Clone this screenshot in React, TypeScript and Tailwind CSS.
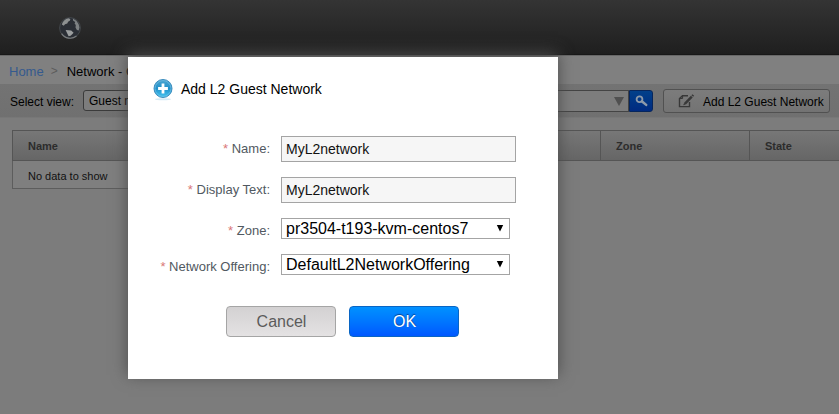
import type { ReactNode } from "react";

function Globe() {
  return (
    <svg width="24" height="24" viewBox="0 0 24 24">
      <circle cx="12" cy="12" r="10.4" fill="#2a2e35" stroke="#43474b" strokeWidth="1" />
      <path d="M3.8 8.6C4.8 5.3 7 3 10.4 2.2l2 .9-.6 1.7-1.7 1-.8 1.8-2.3.6-1.2 1.6z" fill="#8d9091" />
      <path d="M14.8 2.6l3.6 2.2 2.2 3.2.9 3.6-.8 2.9-1.8-.4-1.4-2.7.3-2.3-1.2-1.5.6-1.6-2-1.3z" fill="#7d8183" />
      <path d="M7.6 14l3.2.3 2.4.2 2.4 2.2-1.4 1.6-1.6 1.4-2 .6-1.2-2.6z" fill="#9b9e9f" />
      <path d="M3.6 17.6a10.2 10.2 0 0 0 14.9 2.4" fill="none" stroke="#777a7c" strokeWidth="1.1" />
    </svg>
  );
}

function PlusBadge() {
  return (
    <svg width="20" height="23" viewBox="0 0 20 23" className="shrink-0">
      <defs>
        <linearGradient id="badge" x1="0" y1="0" x2="0" y2="1">
          <stop offset="0" stopColor="#4fa5cf" />
          <stop offset=".5" stopColor="#2191cb" />
          <stop offset="1" stopColor="#43c6f2" />
        </linearGradient>
      </defs>
      <ellipse cx="10" cy="20.2" rx="8" ry="1" fill="#d5eaf5" />
      <circle cx="10" cy="9.5" r="9" fill="url(#badge)" stroke="#3b8cbd" strokeWidth="1" />
      <circle cx="10" cy="9.5" r="7.9" fill="none" stroke="#78c3e6" strokeWidth=".6" />
      <path d="M10 4.6v9.8M5.1 9.5h9.8" stroke="#fff" strokeWidth="2.8" />
    </svg>
  );
}

function EditIcon() {
  return (
    <svg width="17" height="16" viewBox="0 0 17 16" fill="none" stroke="#383838">
      <path d="M10 2.7H4.5L1.5 5.5v8.1h10V9" strokeWidth="1.4" />
      <path d="M4.6 2.7v2.8H1.5" strokeWidth="1" />
      <path d="M7 10.6l6.8-7" strokeWidth="2.5" />
      <path d="M14.3 3l1-1" strokeWidth="2.4" />
      <path d="M5.6 12l1-2 1 1z" fill="#383838" strokeWidth=".6" />
    </svg>
  );
}

function Field({ label, className, children }: { label: string; className: string; children: ReactNode }) {
  return (
    <div className={`flex ${className}`}>
      <div className="mr-[11px] w-[142px] shrink-0 whitespace-nowrap pt-[5px] text-right text-[13px] leading-[15px] text-[#515961]">
        <span className="text-[#d97878]">* </span>
        {label}:
      </div>
      {children}
    </div>
  );
}

function TextBox({ value }: { value: string }) {
  return (
    <div className="h-[26px] w-[235px] border border-[#a4a4a4] bg-[#f6f6f6] pl-1 text-[14px] leading-[25px] text-[#111]">
      {value}
    </div>
  );
}

function SelectBox({ value }: { value: string }) {
  return (
    <div className="flex h-[21px] w-[229px] items-center justify-between border border-[#a4a4a4] bg-white pl-1 pr-[5px] text-[16px] leading-[19px] text-black">
      <span>{value}</span>
      <svg width="8" height="9" viewBox="0 0 8 9">
        <path d="M.8 1h6.4L4 7.6z" fill="#000" />
      </svg>
    </div>
  );
}

function HeaderCell({ text, className }: { text: string; className: string }) {
  return (
    <div className={`border-l border-[#555] pl-[15px] text-[11px] font-bold leading-[30px] text-[#2c2c2c] ${className}`}>
      {text}
    </div>
  );
}

export default function App() {
  return (
    <div className="relative h-[414px] w-[839px] overflow-hidden bg-[#7c7c7c] font-['Liberation_Sans',Arial,sans-serif] text-black">
      <header className="h-[55px] border-b border-[#181818] bg-linear-to-b from-[#343434] to-[#1f1f1f] pl-[58px] pt-4">
        <Globe />
      </header>

      <nav className="flex h-[29px] items-center border-t border-[#686868] bg-[#808080] pl-[9px] pt-[3px] text-[13px] leading-[15px]">
        <span className="text-[#355a8e]">Home</span>
        <span className="ml-[7px] text-[12px] text-[#5c5c5c]">&gt;</span>
        <span className="ml-[9px] whitespace-nowrap">Network - Guest networks</span>
      </nav>

      <div className="flex h-[34px] items-center border-b border-[#777] bg-linear-to-b from-[#737373] to-[#707070] pl-[10px] text-[12px]">
        <span className="w-[73px] pt-[2px]">Select view:</span>
        <div className="h-[21px] w-[160px] rounded-[3px] border border-[#3b3b3b] bg-[#7d7d7d] pl-[5px] leading-[21px]">
          Guest networks
        </div>
        <div className="ml-[157px] flex h-[22px] w-[229px] items-center justify-end border border-[#444] bg-[#7d7d7d] pr-[4px] pt-px">
          <svg width="10" height="9" viewBox="0 0 10 9">
            <path d="M0 0h10L5 9z" fill="#505050" />
          </svg>
        </div>
        <div className="flex h-[22px] w-[24px] items-center justify-center rounded-r-[3px] border border-[#07265c] bg-linear-to-b from-[#02408a] to-[#002a80]">
          <svg width="13" height="12" viewBox="0 0 13 12" fill="none" stroke="#8d9aaa">
            <circle cx="4.5" cy="4.2" r="2.9" strokeWidth="1.8" />
            <path d="M6.8 6.2l4.4 3.7" strokeWidth="2.5" strokeLinecap="round" />
          </svg>
        </div>
        <div className="ml-[10px] flex h-[24px] w-[167px] items-center rounded-[3px] border border-[#515151] bg-linear-to-b from-[#7c7c7c] to-[#737373] pl-[14px]">
          <EditIcon />
          <span className="ml-[8px] whitespace-nowrap pt-[2px]">Add L2 Guest Network</span>
        </div>
      </div>

      <section className="pl-3 pt-3">
        <div className="flex h-[31px] border-y border-[#555] bg-linear-to-b from-[#777] to-[#666]">
          <HeaderCell text="Name" className="w-[588px]" />
          <HeaderCell text="Zone" className="w-[149px]" />
          <HeaderCell text="State" className="w-[90px]" />
        </div>
        <div className="h-[28px] w-[400px] border border-t-0 border-[#5d5d5d] bg-[#7f7f7f] pl-[15px] text-[11px] leading-[31px] text-[#111]">
          No data to show
        </div>
      </section>

      <div className="absolute left-[128px] top-[57px] h-[322px] w-[430px] bg-white shadow-[0_-4px_15px_#4b4b4b]">
        <div className="flex pl-[25px] pt-[22px]">
          <PlusBadge />
          <h1 className="ml-[8px] pt-[2px] text-[14px] leading-[16px] text-black">Add L2 Guest Network</h1>
        </div>

        <Field label="Name" className="mt-[34px]">
          <TextBox value="MyL2network" />
        </Field>
        <Field label="Display Text" className="mt-[15px]">
          <TextBox value="MyL2network" />
        </Field>
        <Field label="Zone" className="mt-[15px]">
          <SelectBox value="pr3504-t193-kvm-centos7" />
        </Field>
        <Field label="Network Offering" className="mt-[15px]">
          <SelectBox value="DefaultL2NetworkOffering" />
        </Field>

        <div className="mt-[31px] flex gap-[13px] pl-[98px] text-[16px]">
          <button className="h-[31px] w-[110px] rounded-[4px] border border-[#a5a5a5] bg-linear-to-b from-[#d3d1d2] to-[#e4e2e3] pl-px leading-[29px] text-[#5b5b5b]">
            Cancel
          </button>
          <button className="h-[31px] w-[110px] rounded-[4px] border border-[#0965c4] bg-linear-to-b from-[#0391ff] to-[#0257ff] pl-px leading-[29px] text-white [text-shadow:0_-1px_1px_#08408a]">
            OK
          </button>
        </div>
      </div>
    </div>
  );
}
